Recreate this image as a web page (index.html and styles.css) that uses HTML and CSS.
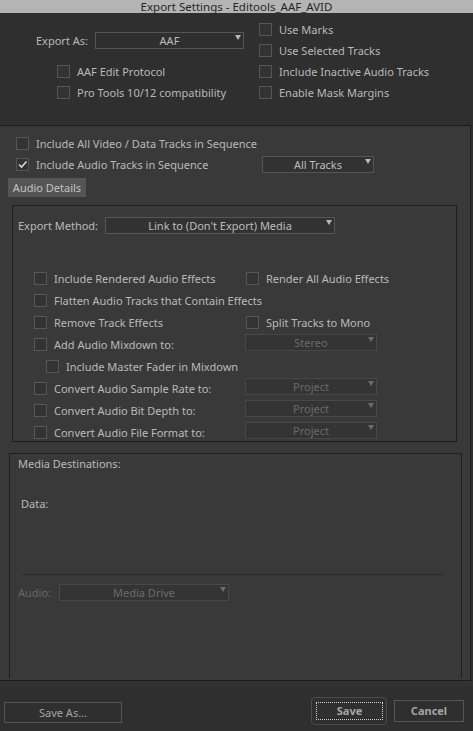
FILE: index.html
```html
<!DOCTYPE html>
<html><head><meta charset="utf-8"/>
<title>Export Settings - Editools_AAF_AVID</title>
<link rel="stylesheet" href="styles.css">
</head>
<body>

<div class="titlebar">Export Settings - Editools_AAF_AVID</div>

<div class="top">
	<div class="export-as"><span>Export As:</span><div class="select w-export">AAF</div></div>
	<div class="check left r3"><span class="box"></span>AAF Edit Protocol</div>
	<div class="check left r4"><span class="box"></span>Pro Tools 10/12 compatibility</div>
	<div class="check right r1"><span class="box"></span>Use Marks</div>
	<div class="check right r2"><span class="box"></span>Use Selected Tracks</div>
	<div class="check right r3"><span class="box"></span>Include Inactive Audio Tracks</div>
	<div class="check right r4"><span class="box"></span>Enable Mask Margins</div>
</div>

<div class="panel">
	<div class="check seq"><span class="box"></span>Include All Video / Data Tracks in Sequence</div>
	<div class="seq-audio">
		<div class="check"><span class="box on"><svg width="11" height="11" viewBox="0 0 11 11"><path d="M2 5.5 L4.5 8 L9.5 2.5" fill="none" stroke="#d8d8d8" stroke-width="1.6"/></svg></span>Include Audio Tracks in Sequence</div>
		<div class="select w-tracks">All Tracks</div>
	</div>
	<div class="tab">Audio Details</div>

	<div class="details">
		<div class="method"><span>Export Method:</span><div class="select w-method">Link to (Don't Export) Media</div></div>
		<div class="opts">
			<div class="check"><span class="box"></span>Include Rendered Audio Effects</div>
			<div class="check col2"><span class="box"></span>Render All Audio Effects</div>
			<div class="check span"><span class="box"></span>Flatten Audio Tracks that Contain Effects</div>
			<div class="check"><span class="box"></span>Remove Track Effects</div>
			<div class="check col2"><span class="box"></span>Split Tracks to Mono</div>
			<div class="check"><span class="box"></span>Add Audio Mixdown to:</div>
			<div class="select off w-opt">Stereo</div>
			<div class="check span indent"><span class="box"></span>Include Master Fader in Mixdown</div>
			<div class="check"><span class="box"></span>Convert Audio Sample Rate to:</div>
			<div class="select off w-opt">Project</div>
			<div class="check"><span class="box"></span>Convert Audio Bit Depth to:</div>
			<div class="select off w-opt">Project</div>
			<div class="check"><span class="box"></span>Convert Audio File Format to:</div>
			<div class="select off w-opt">Project</div>
		</div>
	</div>

	<div class="media">
		<div class="media-title">Media Destinations:</div>
		<div class="data">Data:</div>
		<div class="sep"></div>
		<div class="audio-row"><span>Audio:</span><div class="select off w-drive">Media Drive</div></div>
	</div>
</div>

<div class="footer">
	<div class="btn save-as">Save As...</div>
	<div class="btn-focus"><div class="btn save">Save</div></div>
	<div class="btn cancel">Cancel</div>
</div>

</body>
</html>
```

FILE: styles.css
```css
body {
	margin: 0;
	width: 473px;
	height: 731px;
	overflow: hidden;
	background: #2f2f2f;
	font-family: "Noto Sans", "Open Sans", sans-serif;
	font-size: 11px;
	color: #b9b9b9;
}
/* title */
.titlebar {
	height: 13px;
	line-height: 13px;
	background: #b4b4b4;
	color: #262626;
	text-align: center;
	font-size: 11.5px;
}
/* checkboxes */
.check {
	display: flex;
	align-items: center;
	gap: 7px;
	height: 21px;
	white-space: nowrap;
}
.box {
	flex: none;
	display: flex;
	align-items: center;
	justify-content: center;
	width: 13px;
	height: 13px;
	box-sizing: border-box;
	border: 1px solid #565656;
	background: #333;
}
/* dropdowns */
.select {
	position: relative;
	height: 17px;
	line-height: 15px;
	box-sizing: border-box;
	border: 1px solid #555;
	background: #323232;
	text-align: center;
	color: #bdbdbd;
}
.select::after {
	content: "";
	position: absolute;
	right: 2px;
	top: 2px;
	border-left: 3px solid transparent;
	border-right: 3px solid transparent;
	border-top: 5px solid #b8b8b8;
}
.select.off {
	border-color: #484848;
	background: #343434;
	color: #6a6a6a;
}
.select.off::after {
	border-top-color: #6c6c6c;
}
.w-export { width: 149px; background: #2f2f2f; }
.w-tracks { width: 112px; }
.w-method { width: 230px; }
.w-opt { width: 132px; margin-top: 1px; }
.w-drive { width: 170px; }
/* top section */
.top {
	height: 112px;
	box-sizing: border-box;
	padding-top: 6px;
	display: grid;
	grid-template-columns: 259px 1fr;
	grid-template-rows: repeat(4, 21px);
}
.export-as {
	grid-column: 1;
	grid-row: 1 / 3;
	display: flex;
	align-items: center;
	gap: 7px;
	padding-left: 36px;
}
.top .left { grid-column: 1; padding-left: 57px; }
.top .right { grid-column: 2; }
.r1 { grid-row: 1; }
.r2 { grid-row: 2; }
.r3 { grid-row: 3; }
.r4 { grid-row: 4; }
/* main panel */
.panel {
	height: 556px;
	width: 471px;
	box-sizing: border-box;
	background: #393939;
	border-top: 1px solid #1d1d1d;
	border-right: 1px solid #1d1d1d;
	border-bottom: 1px solid #1d1d1d;
	overflow: hidden;
}
.seq {
	margin-top: 7px;
	padding-left: 16px;
}
.seq-audio {
	display: grid;
	grid-template-columns: 246px 112px;
	align-items: center;
	padding-left: 16px;
	height: 21px;
}
.tab {
	margin: 3px 0 0 8px;
	width: 78px;
	height: 19px;
	line-height: 19px;
	background: #555;
	color: #c2c2c2;
	text-align: center;
}
/* audio details */
.details {
	margin: 8px 0 0 12px;
	width: 445px;
	height: 237px;
	box-sizing: border-box;
	border: 1px solid #1e1e1e;
	padding: 11px 0 0 5px;
	overflow: hidden;
}
.method {
	display: flex;
	align-items: center;
	gap: 7px;
	height: 17px;
}
.opts {
	margin: 33px 0 0 16px;
	display: grid;
	grid-template-columns: 211px 132px;
	grid-auto-rows: 22px;
	align-items: start;
}
.opts .check { height: 22px; }
.opts .col2 { padding-left: 1px; }
.opts .span { grid-column: 1 / 3; }
.opts .indent { padding-left: 12px; }
/* media destinations */
.media {
	margin: 11px 0 0 9px;
	width: 453px;
	height: 225px;
	box-sizing: border-box;
	border: 1px solid #1e1e1e;
	border-bottom: none;
	padding-left: 8px;
}
.media-title {
	margin-top: 2px;
	line-height: 16px;
}
.data {
	margin: 24px 0 0 3px;
	line-height: 16px;
}
.sep {
	margin: 62px 0 0 4px;
	width: 421px;
	height: 1px;
	background: #272727;
}
.audio-row {
	margin-top: 9px;
	display: flex;
	align-items: center;
	gap: 8px;
	color: #676767;
}
/* footer */
.footer {
	height: 50px;
	display: flex;
	align-items: flex-start;
	border-top: 6px solid #323232;
	box-sizing: border-box;
}
.btn {
	box-sizing: border-box;
	border: 1px solid #555;
	text-align: center;
	color: #a5a5a5;
}
.save-as {
	margin: 15px 0 0 4px;
	width: 118px;
	height: 21px;
	line-height: 19px;
}
.btn-focus {
	margin: 10px 0 0 189px;
	width: 76px;
	height: 28px;
	box-sizing: border-box;
	border: 1px solid #4c4c4c;
	border-radius: 4px;
	padding: 4px 0 0 4px;
}
.save {
	width: 67px;
	height: 18px;
	line-height: 16px;
	border: 1px dotted #d0d0d0;
	font-weight: bold;
}
.cancel {
	margin: 13px 0 0 7px;
	width: 70px;
	height: 22px;
	line-height: 20px;
	font-weight: bold;
}
```
